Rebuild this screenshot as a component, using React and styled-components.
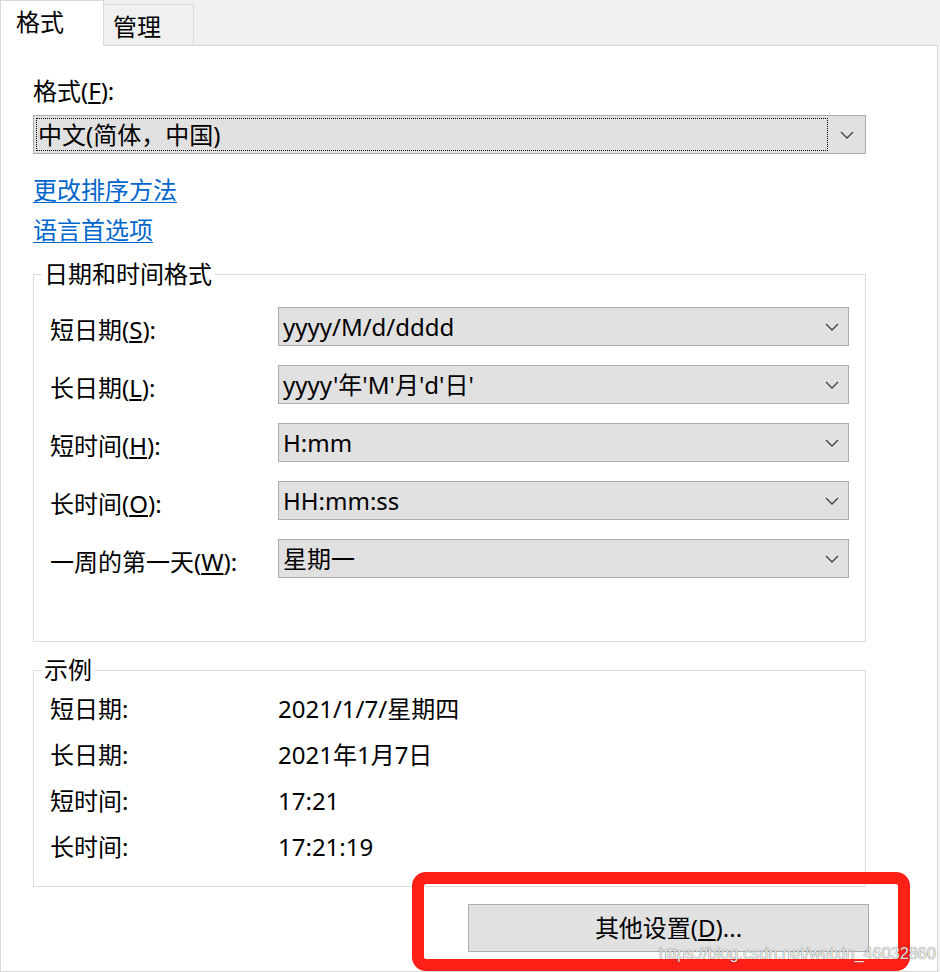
import React from "react";
import styled, { createGlobalStyle } from "styled-components";

const Global = createGlobalStyle`
  html, body { margin: 0; padding: 0; background: #f0f0f0; }
  body {
    font-family: "Noto Sans", "Noto Sans CJK SC", sans-serif;
    color: #000;
  }
  * { box-sizing: border-box; }
`;

const Root = styled.div`
  position: relative;
  width: 940px;
  height: 972px;
  background: #f0f0f0;
  overflow: hidden;
  font-size: 24px;
  line-height: 32px;
`;

const TabStrip = styled.div`
  position: relative;
  z-index: 1;
  display: flex;
  align-items: flex-end;
  height: 45px;
`;

const Tab = styled.div`
  display: flex;
  align-items: center;
  border: 1px solid #d9d9d9;
  border-bottom: none;
  ${(p) =>
    p.$active
      ? `
    width: 104px;
    height: 46px;
    margin-bottom: -1px;
    background: #fff;
    padding: 0 0 3px 15px;
  `
      : `
    width: 90px;
    height: 41px;
    border-left: none;
    background: #f0f0f0;
    padding: 3px 0 0 9px;
  `}
`;

const Panel = styled.div`
  width: 938px;
  height: 927px;
  background: #fff;
  border: 1px solid #d9d9d9;
  padding: 29px 0 0 32px;
  display: flex;
  flex-direction: column;
`;

const FieldLabel = styled.div`
  height: 32px;
`;

const Select = styled.div`
  display: flex;
  align-items: stretch;
  width: ${(p) => p.$width}px;
  height: 39px;
  background: #e1e1e1;
  border: 1px solid #adadad;
  margin-top: ${(p) => p.$mt || 0}px;
`;

const FocusBox = styled.div`
  flex: 1;
  margin: 2px 0 2px 2px;
  border: 1px dotted #000;
  display: flex;
  align-items: center;
  padding-left: 1px;
`;

const SelectText = styled.div`
  flex: 1;
  display: flex;
  align-items: center;
  padding-left: 4px;
`;

const Arrow = styled.div`
  width: ${(p) => p.$w}px;
  display: flex;
  align-items: center;
  justify-content: center;
`;

const Links = styled.div`
  display: flex;
  flex-direction: column;
  gap: 8px;
  margin-top: 20px;
  align-items: flex-start;
`;

const Link = styled.a`
  color: #0066cc;
  text-decoration: underline;
  text-underline-offset: 3px;
  text-decoration-thickness: 1px;
  cursor: pointer;
`;

const Group = styled.div`
  position: relative;
  width: 833px;
  height: ${(p) => p.$h}px;
  margin-top: ${(p) => p.$mt}px;
  border: 1px solid #dcdcdc;
  padding: ${(p) => p.$pt}px 16px 0 16px;
  display: flex;
  flex-direction: column;
  gap: ${(p) => p.$gap}px;
`;

const Legend = styled.div`
  position: absolute;
  left: 8px;
  top: -17px;
  padding: 0 2px;
  background: #fff;
  line-height: 32px;
`;

const Row = styled.div`
  display: flex;
  align-items: center;
  height: ${(p) => p.$h}px;
`;

const RowLabel = styled.div`
  width: 228px;
  padding-top: ${(p) => p.$pt || 0}px;
`;

const RowValue = styled.div`
  flex: 1;
`;

const Footer = styled.div`
  display: flex;
  justify-content: flex-end;
  width: 836px;
  margin-top: 17px;
`;

const Button = styled.button`
  width: 401px;
  height: 48px;
  background: #e1e1e1;
  border: 1px solid #adadad;
  font: inherit;
  color: #000;
  padding: 0;
  display: flex;
  align-items: center;
  justify-content: center;
`;

const Annotation = styled.div`
  position: absolute;
  left: 412px;
  top: 872px;
  width: 498px;
  height: 99px;
  border: 12px solid #fe1f17;
  border-radius: 14px;
  pointer-events: none;
`;

const Watermark = styled.div`
  position: absolute;
  left: 659px;
  top: 942px;
  font-family: "Liberation Sans", Arial, sans-serif;
  font-size: 16.3px;
  line-height: 22px;
  color: rgba(255, 255, 255, 0.9);
  text-shadow: 0 0 1px rgba(0, 0, 0, 0.55), 0 0 1px rgba(0, 0, 0, 0.35);
  white-space: nowrap;
  pointer-events: none;
`;

const Chevron = () => (
  <svg width="14" height="8" viewBox="0 0 14 8">
    <polyline
      points="1,1 7,7 13,1"
      fill="none"
      stroke="#404040"
      strokeWidth="1.3"
    />
  </svg>
);

const formatRows = [
  ["短日期(", "S", "):", "yyyy/M/d/dddd"],
  ["长日期(", "L", "):", "yyyy'年'M'月'd'日'"],
  ["短时间(", "H", "):", "H:mm"],
  ["长时间(", "O", "):", "HH:mm:ss"],
  ["一周的第一天(", "W", "):", "星期一"],
];

const sampleRows = [
  ["短日期:", "2021/1/7/星期四"],
  ["长日期:", "2021年1月7日"],
  ["短时间:", "17:21"],
  ["长时间:", "17:21:19"],
];

export default function App() {
  return (
    <Root>
      <Global />
      <TabStrip>
        <Tab $active>格式</Tab>
        <Tab>管理</Tab>
      </TabStrip>
      <Panel>
        <FieldLabel>
          格式(<u>F</u>):
        </FieldLabel>
        <Select $width={833} $mt={8}>
          <FocusBox>中文(简体，中国)</FocusBox>
          <Arrow $w={37}>
            <Chevron />
          </Arrow>
        </Select>
        <Links>
          <Link>更改排序方法</Link>
          <Link>语言首选项</Link>
        </Links>
        <Group $h={368} $mt={28} $pt={32} $gap={19}>
          <Legend>日期和时间格式</Legend>
          {formatRows.map(([a, k, b, v]) => (
            <Row key={a} $h={39}>
              <RowLabel $pt={6}>
                {a}
                <u>{k}</u>
                {b}
              </RowLabel>
              <Select $width={571}>
                <SelectText>{v}</SelectText>
                <Arrow $w={32}>
                  <Chevron />
                </Arrow>
              </Select>
            </Row>
          ))}
        </Group>
        <Group $h={217} $mt={28} $pt={22} $gap={14}>
          <Legend>示例</Legend>
          {sampleRows.map(([a, v]) => (
            <Row key={a} $h={32}>
              <RowLabel>{a}</RowLabel>
              <RowValue>{v}</RowValue>
            </Row>
          ))}
        </Group>
        <Footer>
          <Button>
            其他设置(<u>D</u>)...
          </Button>
        </Footer>
      </Panel>
      <Annotation />
      <Watermark>https://blog.csdn.net/weixin_46032860</Watermark>
    </Root>
  );
}
